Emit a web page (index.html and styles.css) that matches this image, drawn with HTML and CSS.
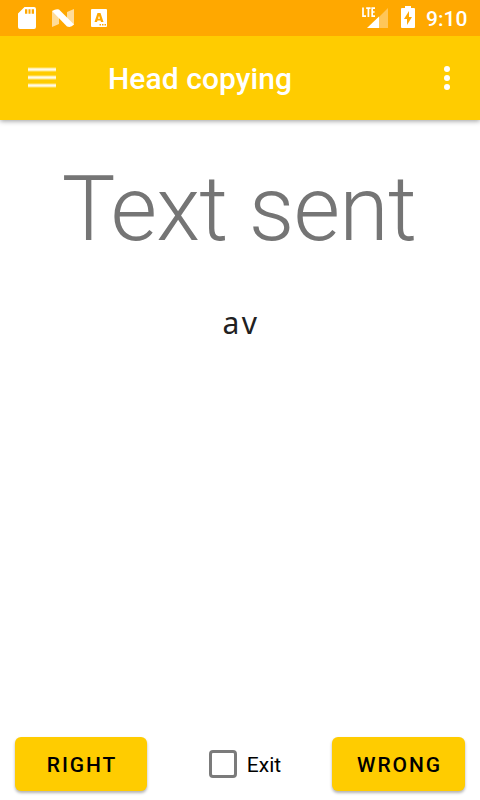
FILE: index.html
```html
<!DOCTYPE html>
<html lang="en">
<head>
<meta charset="utf-8">
<title>Head copying</title>
<link rel="stylesheet" href="styles.css">
</head>
<body>
<div class="screen">
  <div class="status">
    <svg class="status-left" width="120" height="36" viewBox="0 0 120 36" fill="#fff">
      <path fill-rule="evenodd" d="M24.500 7H34Q36 7 36 9V27Q36 29 34 29H20Q18 29 18 27V13.500ZM25 9.300V13.700H27.300V9.300ZM28.500 9.300V13.700H30.500V9.300ZM31.700 9.300V13.700H34V9.300Z"/>
      <path opacity=".6" d="M52 11L59 15V24L52 27ZM74 9V25L67 21V12Z"/>
      <path d="M52 11Q56 8.500 59 9.500L74 24.500Q71 28 67 26.500Z"/>
      <path fill-rule="evenodd" d="M92 9H106Q107 9 107 10V26Q107 27 106 27H92Q91 27 91 26V10Q91 9 92 9ZM97.500 13L94.500 22H97L97.500 20.500H100.500L101 22H103.500L100.500 13ZM99 15.700L100 18.700H98ZM99.500 24V25.500H101V24ZM102 24V25.500H103.500V24ZM104.500 24V25.500H106V24Z"/>
    </svg>
    <div class="status-right">
      <svg width="60" height="36" viewBox="0 0 60 36" fill="#fff">
        <path opacity=".35" d="M28 8V28H19V17Z"/>
        <path d="M19 16.500V28H7Z"/>
        <path fill="none" stroke="#fff" stroke-width="1.700" d="M3 7.500V16.200H6M6.200 8.200H10.600M8.400 8.200V17M15 8.200H12.200V16.200H15M12.200 12H14.600"/>
        <path fill-rule="evenodd" d="M45 6H51V8H54Q55 8 55 9V27Q55 28 54 28H42Q41 28 41 27V9Q41 8 42 8H45ZM49 11L44 19H47V25L52 17H49Z"/>
      </svg>
      <span class="clock">9:10</span>
    </div>
  </div>
  <header class="bar">
    <svg class="menu" width="28" height="22" viewBox="0 0 28 22" fill="#fff">
      <path opacity=".5" d="M0 .5H28V4.500H0ZM0 8.500H28V12.500H0ZM0 16.500H28V20.500H0Z"/>
      <path opacity=".8" d="M0 1.500H28V3.500H0ZM0 9.500H28V11.500H0ZM0 17.500H28V19.500H0Z"/>
    </svg>
    <h1 class="title">Head copying</h1>
    <svg class="more" width="6" height="24" viewBox="0 0 6 24" fill="#fff">
      <circle cx="3" cy="3" r="3"/><circle cx="3" cy="12" r="3"/><circle cx="3" cy="21" r="3"/>
    </svg>
  </header>
  <main class="content">
    <h2 class="headline">Text sent</h2>
    <p class="sent">av</p>
  </main>
  <footer class="actions">
    <button class="btn btn-right">RIGHT</button>
    <label class="exit"><span class="box"></span>Exit</label>
    <button class="btn btn-wrong">WRONG</button>
  </footer>
</div>
</body>
</html>
```

FILE: styles.css
```css
* { box-sizing: border-box; }
body { margin: 0; background: #fff; font-family: Roboto, sans-serif; }
.screen { width: 480px; height: 800px; display: flex; flex-direction: column; overflow: hidden; }
.status { height: 36px; background: #ffa800; display: flex; justify-content: space-between; position: relative; z-index: 1; }
.status-right { display: flex; width: 120px; }
.status svg { flex: none; display: block; }
.clock { color: #fff; font-size: 21px; line-height: 38px; font-weight: 500; margin-left: 6px; }
.bar { height: 84px; background: #fc0; display: flex; align-items: center; padding: 0 30px 0 28px; box-shadow: 0 1px 5px rgba(0, 0, 0, .4); }
.title { margin: 2px 0 0 52px; color: #fff; font-size: 30px; font-weight: 500; line-height: 36px; letter-spacing: .07px; white-space: nowrap; }
.more { margin-left: auto; }
.content { flex: 1; text-align: center; }
.headline { margin: 37px 0 0; padding-right: 2px; color: #757575; font-size: 90px; line-height: 106px; font-weight: 300; letter-spacing: -.75px; white-space: nowrap; }
.sent { margin: 40px 0 0; padding-left: 2px; color: #212121; font-family: "Noto Sans", sans-serif; font-size: 30px; line-height: 40px; letter-spacing: 2.5px; }
.actions { height: 63px; padding: 0 15px; display: flex; align-items: flex-start; justify-content: space-between; }
.btn { height: 54px; border: 0; border-radius: 6px; padding: 2px 0 0 2px; background: #fc0; color: #000; font: 500 21px/52px Roboto, sans-serif; letter-spacing: 1.88px; box-shadow: 0 2px 3px rgba(0, 0, 0, .3); }
.btn-right { width: 132px; }
.btn-wrong { width: 133px; }
.exit { display: flex; align-items: center; height: 54px; padding-top: 1px; font-size: 21px; color: #000; gap: 10px; margin-left: 11px; }
.box { width: 28px; height: 28px; margin-top: -2px; border: 3px solid #7b7b7b; border-radius: 4px; }
```
